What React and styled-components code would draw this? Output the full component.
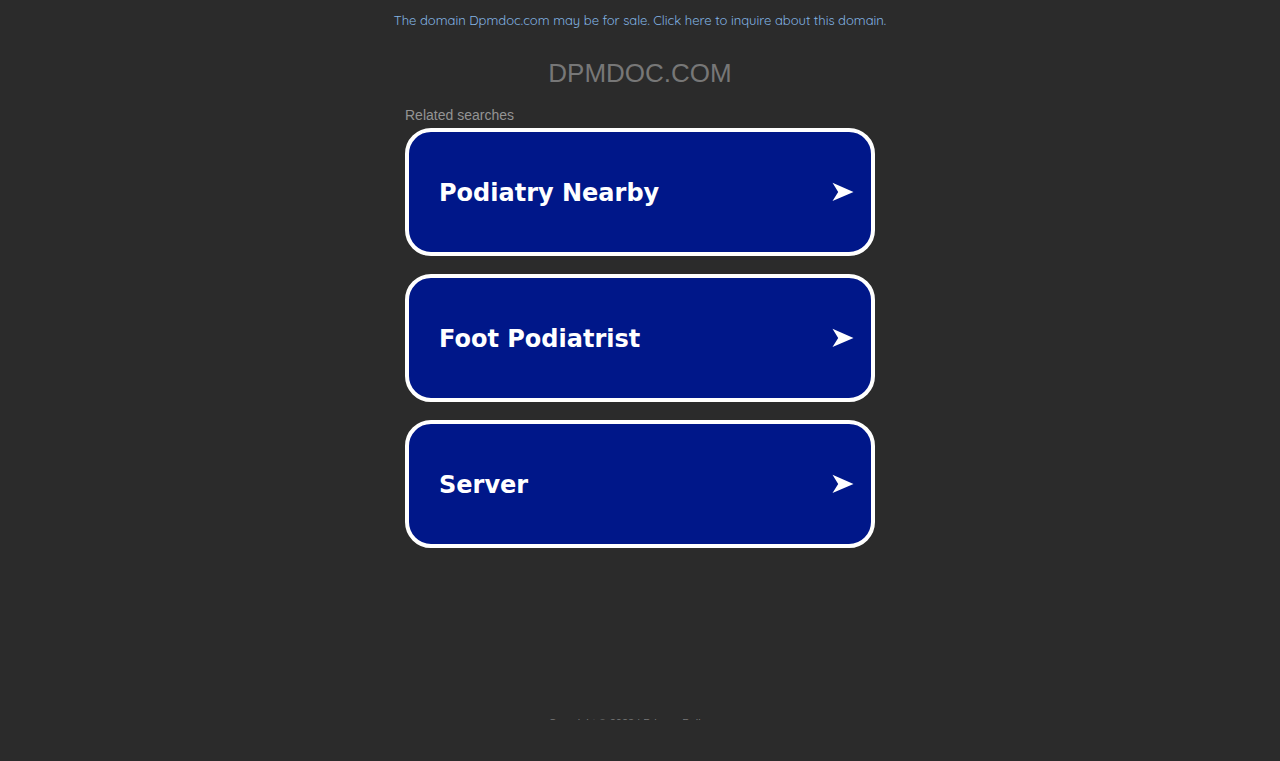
import React from "react";
import styled, { createGlobalStyle } from "styled-components";

const GlobalStyle = createGlobalStyle`
  * { box-sizing: border-box; }
  html { background: #2b2b2b; }
  body {
    margin: 0;
    background: #2b2b2b;
    font-family: "Liberation Sans", Arial, sans-serif;
  }
`;

const Page = styled.div`
  display: flex;
  flex-direction: column;
  height: calc(100vh - 41px);
  min-height: 600px;
  overflow: hidden;
`;

const SaleNotice = styled.header`
  padding: 10px;
  text-align: center;
  font-family: Quicksand, Lato, sans-serif;
  font-size: 13px;
  line-height: 20px;
`;

const SaleLink = styled.a`
  color: #83b4e4;
  text-decoration: none;
`;

const DomainName = styled.h1`
  margin: 16px 0;
  text-align: center;
  font-size: 26px;
  line-height: 34px;
  font-weight: 400;
  color: #777;
`;

const Searches = styled.main`
  flex: 1 0 auto;
  width: 100%;
  max-width: 470px;
  margin: 0 auto;
`;

const SearchesTitle = styled.h2`
  margin: 0 0 4px;
  font-size: 14px;
  line-height: 18px;
  font-weight: 400;
  color: #949494;
`;

const SearchList = styled.nav`
  display: flex;
  flex-direction: column;
  gap: 18px;
`;

const SearchCard = styled.a`
  display: flex;
  align-items: center;
  justify-content: space-between;
  min-height: 128px;
  padding: 0 17px 0 30px;
  border: 4px solid #fff;
  border-radius: 26px;
  background: #001789;
  color: #fff;
  font-family: Tahoma, "DejaVu Sans", sans-serif;
  font-size: 24px;
  line-height: 32px;
  font-weight: 700;
  text-decoration: none;
`;

const Term = styled.span`
  padding-top: 2px;
`;

const Arrow = styled.svg`
  width: 22px;
  height: 20px;
  fill: #fff;
`;

const Footer = styled.footer`
  flex: none;
  height: 3px;
  padding-right: 20px;
  text-align: center;
  font-size: 11px;
  line-height: 13px;
  color: #777;
`;

const FooterLink = styled.a`
  color: inherit;
  text-decoration: none;
`;

const searches = ["Podiatry Nearby", "Foot Podiatrist", "Server"];

export default function App() {
  return (
    <>
      <GlobalStyle />
      <Page>
        <SaleNotice>
          <SaleLink href="#inquire">
            The domain Dpmdoc.com may be for sale. Click here to inquire about this domain.
          </SaleLink>
        </SaleNotice>
        <DomainName>DPMDOC.COM</DomainName>
        <Searches>
          <SearchesTitle>Related searches</SearchesTitle>
          <SearchList>
            {searches.map((term) => (
              <SearchCard key={term} href="#search">
                <Term>{term}</Term>
                <Arrow viewBox="0 0 22 20" aria-hidden="true">
                  <path d="M0.5 0.8 L21.5 10 L0.5 19 L6.2 10 Z" />
                </Arrow>
              </SearchCard>
            ))}
          </SearchList>
        </Searches>
        <Footer>
          Copyright © 2023 | <FooterLink href="#privacy">Privacy Policy</FooterLink>
        </Footer>
      </Page>
    </>
  );
}
